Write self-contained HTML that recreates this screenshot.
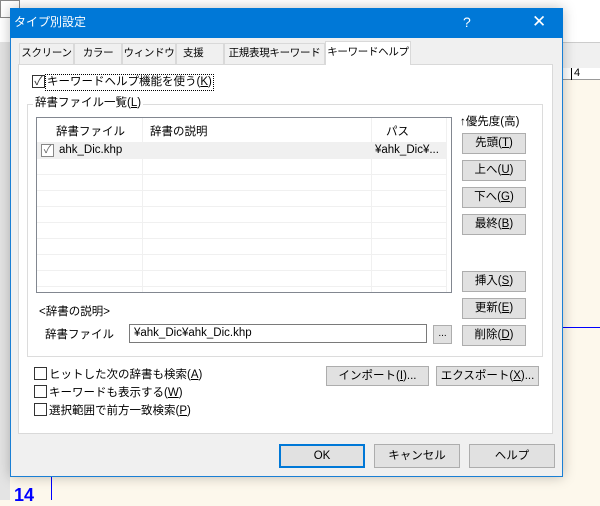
<!DOCTYPE html>
<html><head><meta charset="utf-8"><style>
*{margin:0;padding:0;box-sizing:border-box}
body{width:600px;height:500px;position:relative;overflow:hidden;background:#fdf8ec;font-family:"Liberation Sans","Noto Sans CJK JP",sans-serif;font-size:11.5px;color:#000;white-space:nowrap}
.a{position:absolute}
.btn{position:absolute;background:#e1e1e1;border:1px solid #adadad;text-align:center;line-height:18px}
.cb{position:absolute;width:13px;height:13px;border:1px solid #333;background:#fff}
.tab{position:absolute;top:43px;height:21px;border:1px solid #d9d9d9;border-bottom:none;background:#f0f0f0;line-height:19px;text-align:center;overflow:hidden;font-size:10.5px;letter-spacing:-0.3px}
.hl{position:absolute;left:0;width:410px;height:1px;background:#f0f0f0}
</style></head><body>
<div class="a" style="left:0;top:0;width:600px;height:42px;background:#fff"></div>
<div class="a" style="left:0;top:42px;width:600px;height:26px;background:#f0f0f0;border-top:1px solid #ccc"></div>
<div class="a" style="left:0;top:68px;width:600px;height:12px;background:#fff;border-bottom:1px solid #999"></div>
<div class="a" style="left:574px;top:67px;font-size:11px;line-height:12px">4</div>
<div class="a" style="left:571px;top:68px;width:1px;height:12px;background:#000"></div>
<div class="a" style="left:0;top:42px;width:10px;height:458px;background:#e4e4e4"></div>
<div class="a" style="left:563px;top:327px;width:37px;height:1px;background:#00f"></div>
<div class="a" style="left:51px;top:477px;width:1px;height:23px;background:#00f"></div>
<div class="a" style="left:14px;top:485px;color:#00f;font-weight:bold;font-size:18px">14</div>
<div class="a" style="left:0;top:0;width:20px;height:18px;border:1px solid #888;background:#fff"></div>

<div class="a" style="left:10px;top:8px;width:553px;height:469px;background:#f0f0f0;border:1px solid #1a7fd4;box-shadow:0 0 12px rgba(0,0,0,.25)">
 <div class="a" style="left:-1px;top:-1px;width:553px;height:30px;background:#0078d7;color:#fff;font-size:12px;line-height:28px;padding-left:4px">タイプ別設定
  <span class="a" style="left:453px;top:0;font-size:14px">?</span>
  <span class="a" style="left:522px;top:0;font-size:17px">✕</span></div>
</div>
<div class="a" style="left:18px;top:64px;width:535px;height:370px;background:#fff;border:1px solid #d9d9d9"></div>
<div class="tab" style="left:19px;width:55px">スクリーン</div>
<div class="tab" style="left:74px;width:48px">カラー</div>
<div class="tab" style="left:122px;width:54px">ウィンドウ</div>
<div class="tab" style="left:176px;width:48px;text-align:left;padding-left:6px">支援</div>
<div class="tab" style="left:224px;width:101px">正規表現キーワード</div>
<div class="a" style="left:325px;top:41px;width:86px;height:24px;background:#fff;border:1px solid #d9d9d9;border-bottom:none;text-align:center;line-height:21px;font-size:10.5px;letter-spacing:-0.3px">キーワードヘルプ</div>

<div class="cb" style="left:32px;top:75px;font-size:12px;line-height:11px;color:#333;text-align:center">✓</div>
<div class="a" style="left:45px;top:74px;border:1px dotted #000;padding:0 1px;line-height:15px">キーワードヘルプ機能を使う(<u>K</u>)</div>

<div class="a" style="left:27px;top:104px;width:516px;height:253px;border:1px solid #dcdcdc"></div>
<div class="a" style="left:33px;top:96px;background:#fff;padding:0 2px;line-height:15px">辞書ファイル一覧(<u>L</u>)</div>

<div class="a" style="left:36px;top:117px;width:416px;height:176px;border:1px solid #828790;background:#fff;overflow:hidden">
 <div class="a" style="left:0;top:24px;width:410px;height:17px;background:#f0f0f0"></div>
 <div class="a" style="left:105px;top:0;width:1px;height:176px;background:#f0f0f0"></div>
 <div class="a" style="left:334px;top:0;width:1px;height:176px;background:#f0f0f0"></div>
 <div class="a" style="left:409px;top:0;width:1px;height:176px;background:#f0f0f0"></div>
 <div class="a" style="left:19px;top:5px">辞書ファイル</div>
 <div class="a" style="left:113px;top:5px">辞書の説明</div>
 <div class="a" style="left:349px;top:5px">パス</div>
 <div class="a" style="left:4px;top:26px;width:13px;height:13px;border:1px solid #888;background:#fff;color:#666;font-size:11px;line-height:11px;text-align:center">✓</div>
 <div class="a" style="left:22px;top:26px">ahk_Dic.khp</div>
 <div class="a" style="left:338px;top:26px;width:70px;overflow:hidden">¥ahk_Dic¥...</div>
 <div class="hl" style="top:56px"></div><div class="hl" style="top:72px"></div>
 <div class="hl" style="top:88px"></div><div class="hl" style="top:104px"></div>
 <div class="hl" style="top:120px"></div><div class="hl" style="top:136px"></div>
 <div class="hl" style="top:152px"></div><div class="hl" style="top:168px"></div>
</div>

<div class="a" style="left:460px;top:115px;line-height:15px">↑優先度(高)</div>
<div class="btn" style="left:462px;top:133px;width:64px;height:21px">先頭(<u>T</u>)</div>
<div class="btn" style="left:462px;top:160px;width:64px;height:21px">上へ(<u>U</u>)</div>
<div class="btn" style="left:462px;top:187px;width:64px;height:21px">下へ(<u>G</u>)</div>
<div class="btn" style="left:462px;top:214px;width:64px;height:21px">最終(<u>B</u>)</div>
<div class="btn" style="left:462px;top:271px;width:64px;height:21px">挿入(<u>S</u>)</div>
<div class="btn" style="left:462px;top:298px;width:64px;height:21px">更新(<u>E</u>)</div>
<div class="btn" style="left:462px;top:325px;width:64px;height:21px">削除(<u>D</u>)</div>

<div class="a" style="left:39px;top:303px">&lt;辞書の説明&gt;</div>
<div class="a" style="left:45px;top:326px">辞書ファイル</div>
<div class="a" style="left:129px;top:324px;width:298px;height:19px;border:1px solid #7a7a7a;background:#fff;padding-left:4px;line-height:17px">¥ahk_Dic¥ahk_Dic.khp</div>
<div class="btn" style="left:433px;top:325px;width:19px;height:19px;line-height:15px;font-size:10px">...</div>

<div class="cb" style="left:34px;top:367px"></div><div class="a" style="left:49px;top:366px">ヒットした次の辞書も検索(<u>A</u>)</div>
<div class="cb" style="left:34px;top:385px"></div><div class="a" style="left:49px;top:384px">キーワードも表示する(<u>W</u>)</div>
<div class="cb" style="left:34px;top:403px"></div><div class="a" style="left:49px;top:402px">選択範囲で前方一致検索(<u>P</u>)</div>
<div class="btn" style="left:326px;top:366px;width:103px;height:20px">インポート(<u>I</u>)...</div>
<div class="btn" style="left:436px;top:366px;width:103px;height:20px">エクスポート(<u>X</u>)...</div>

<div class="btn" style="left:279px;top:444px;width:86px;height:24px;line-height:20px;border:2px solid #0078d7">OK</div>
<div class="btn" style="left:374px;top:444px;width:86px;height:24px;line-height:22px">キャンセル</div>
<div class="btn" style="left:469px;top:444px;width:86px;height:24px;line-height:22px">ヘルプ</div>
</body></html>
